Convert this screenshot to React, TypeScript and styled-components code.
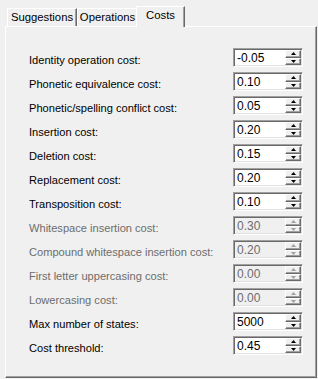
import React from 'react'
import styled, { createGlobalStyle } from 'styled-components'

const GlobalStyle = createGlobalStyle`
  html, body {
    margin: 0;
    padding: 0;
    background: #f0f0f0;
  }
  body {
    width: 318px;
    height: 379px;
    overflow: hidden;
    font-family: 'Liberation Sans', Arial, sans-serif;
    font-size: 11px;
  }
`

const Window = styled.div`
  width: 318px;
  height: 379px;
  box-sizing: border-box;
  padding: 0 1px 1px 5px;
  display: flex;
  flex-direction: column;
`

const TabStrip = styled.div`
  display: flex;
  align-items: flex-end;
  height: 26px;
  padding-left: 2px;
  position: relative;
  z-index: 1;
`

const Tab = styled.div<{ $active?: boolean; $width: number }>`
  box-sizing: border-box;
  width: ${(p) => p.$width}px;
  height: ${(p) => (p.$active ? 21 : 18)}px;
  margin: ${(p) => (p.$active ? '0 -2px -1px -2px' : '0')};
  padding-top: ${(p) => (p.$active ? 2 : 2)}px;
  text-align: center;
  background: #f0f0f0;
  border-top: 1px solid #fff;
  border-left: 1px solid #fff;
  border-right: 1px solid #696969;
  box-shadow: inset -1px 0 0 #a0a0a0;
  color: #000;
  font-size: 11.3px;
  line-height: 13px;
  position: relative;
  z-index: ${(p) => (p.$active ? 2 : 1)};
`

const Panel = styled.div`
  flex: 1;
  box-sizing: border-box;
  border-top: 1px solid #fff;
  border-left: 1px solid #fff;
  border-right: 1px solid #696969;
  border-bottom: 1px solid #696969;
  box-shadow: inset -1px -1px 0 #a0a0a0;
  padding: 21px 13px 0 23px;
  display: flex;
  flex-direction: column;
  gap: 5px;
`

const Row = styled.div`
  display: flex;
  align-items: center;
  justify-content: space-between;
  height: 19px;
`

const Label = styled.span<{ $disabled?: boolean }>`
  color: ${(p) => (p.$disabled ? '#6d6d6d' : '#000')};
  font-size: 11.1px;
  padding-top: 5px;
`

const SpinBox = styled.div<{ $disabled?: boolean }>`
  box-sizing: border-box;
  width: 70px;
  height: 19px;
  display: flex;
  background: ${(p) => (p.$disabled ? '#f0f0f0' : '#fff')};
  border-top: 1px solid #a0a0a0;
  border-left: 1px solid #a0a0a0;
  border-right: 1px solid #fff;
  border-bottom: 1px solid #fff;
  box-shadow: inset 1px 1px 0 #696969, inset -1px -1px 0 #e3e3e3;
`

const Value = styled.span<{ $disabled?: boolean }>`
  flex: 1;
  padding: 2px 0 0 3px;
  line-height: 14px;
  font-size: 12px;
  color: ${(p) => (p.$disabled ? '#6d6d6d' : '#000')};
`

const Buttons = styled.div`
  width: 16px;
  display: flex;
  flex-direction: column;
  padding: 1px 1px 1px 0;
`

const SpinButton = styled.div<{ $disabled?: boolean }>`
  flex: 1;
  display: flex;
  align-items: center;
  justify-content: center;
  background: #f0f0f0;
  border-top: 1px solid #fff;
  border-left: 1px solid #fff;
  border-right: 1px solid #696969;
  border-bottom: 1px solid #696969;
  box-shadow: inset -1px -1px 0 #a0a0a0;
  color: ${(p) => (p.$disabled ? '#a0a0a0' : '#000')};
`

const Arrow: React.FC<{ up?: boolean }> = ({ up }) => (
  <svg width="5" height="3" viewBox="0 0 5 3">
    <path d={up ? 'M2.5 0 L5 3 L0 3 Z' : 'M0 0 L5 0 L2.5 3 Z'} fill="currentColor" />
  </svg>
)

const rows: { label: string; value: string; disabled?: boolean }[] = [
  { label: 'Identity operation cost:', value: '-0.05' },
  { label: 'Phonetic equivalence cost:', value: '0.10' },
  { label: 'Phonetic/spelling conflict cost:', value: '0.05' },
  { label: 'Insertion cost:', value: '0.20' },
  { label: 'Deletion cost:', value: '0.15' },
  { label: 'Replacement cost:', value: '0.20' },
  { label: 'Transposition cost:', value: '0.10' },
  { label: 'Whitespace insertion cost:', value: '0.30', disabled: true },
  { label: 'Compound whitespace insertion cost:', value: '0.20', disabled: true },
  { label: 'First letter uppercasing cost:', value: '0.00', disabled: true },
  { label: 'Lowercasing cost:', value: '0.00', disabled: true },
  { label: 'Max number of states:', value: '5000' },
  { label: 'Cost threshold:', value: '0.45' },
]

export default function App() {
  return (
    <Window>
      <GlobalStyle />
      <TabStrip>
        <Tab $width={70}>Suggestions</Tab>
        <Tab $width={61}>Operations</Tab>
        <Tab $width={49} $active>
          Costs
        </Tab>
      </TabStrip>
      <Panel>
        {rows.map((r) => (
          <Row key={r.label}>
            <Label $disabled={r.disabled}>{r.label}</Label>
            <SpinBox $disabled={r.disabled}>
              <Value $disabled={r.disabled}>{r.value}</Value>
              <Buttons>
                <SpinButton $disabled={r.disabled}>
                  <Arrow up />
                </SpinButton>
                <SpinButton $disabled={r.disabled}>
                  <Arrow />
                </SpinButton>
              </Buttons>
            </SpinBox>
          </Row>
        ))}
      </Panel>
    </Window>
  )
}
